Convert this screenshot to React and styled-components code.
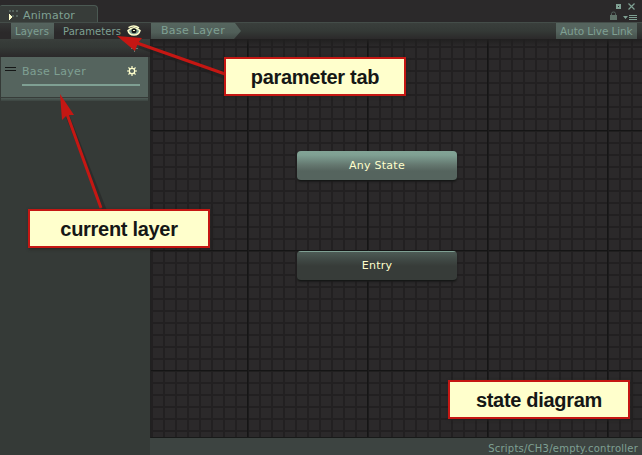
import React from "react";
import styled, { createGlobalStyle } from "styled-components";

const Global = createGlobalStyle`
  * { box-sizing: border-box; }
  body { margin: 0; background: #2b292a; overflow: hidden; }
`;

const Window = styled.div`
  position: relative;
  width: 642px;
  height: 455px;
  display: flex;
  flex-direction: column;
  background: #2b292a;
  color: #7fa093;
  font-family: "DejaVu Sans", sans-serif;
  font-size: 11px;
  overflow: hidden;
`;

const Label = styled.span`
  font-size: ${(p) => p.$size || 11}px;
  letter-spacing: ${(p) => p.$spacing || 0}px;
  line-height: 14px;
  white-space: nowrap;
`;

const TitleBar = styled.header`
  height: 22px;
  flex: none;
  display: flex;
  justify-content: space-between;
  align-items: flex-end;
`;

const WindowTab = styled.div`
  width: 98px;
  height: 17px;
  display: flex;
  align-items: flex-start;
  gap: 4px;
  padding: 3px 0 0 8px;
  border: 1px solid #4b5953;
  border-left: 0;
  border-bottom: 0;
  border-radius: 2px 4px 0 0;
  background: #373c39;
`;

const WindowControls = styled.svg`
  width: 36px;
  height: 22px;
  margin-right: 2px;
`;

const Toolbar = styled.nav`
  height: 17px;
  flex: none;
  display: flex;
  border-top: 1px solid #444d49;
  background: linear-gradient(#3a3f3c, #343936 50%, #2b292a);
`;

const ToolbarSide = styled.div`
  width: 151px;
  display: flex;
  align-items: center;
  padding-left: 11px;
  background: linear-gradient(#343635, #2b292a 60%);
`;

const ToolTab = styled.div`
  width: ${(p) => p.$width}px;
  height: 16px;
  padding: 2px 0 0 ${(p) => p.$inset}px;
  background: ${(p) => (p.$active ? "linear-gradient(#55645e, #505d58 60%, #454f4a)" : "transparent")};
`;

const Crumb = styled.div`
  width: 91px;
  height: 16px;
  padding: 1px 0 0 10px;
  background: linear-gradient(#56665f, #505e58 60%, #414946);
  clip-path: polygon(0 0, 84px 0, 90px 8px, 83px 16px, 0 16px);
`;

const LiveLink = styled.div`
  width: 81px;
  height: 16px;
  margin: 0 5px 0 auto;
  padding: 1px 0 0 4px;
  background: linear-gradient(#55645e, #55645e 50%, #45504b);
`;

const Body = styled.div`
  flex: 1;
  display: flex;
`;

const Sidebar = styled.aside`
  width: 150px;
  background: #353a37;
`;

const AddRow = styled.div`
  height: 18px;
  display: flex;
  justify-content: flex-end;
  padding-right: 11px;
  background: linear-gradient(#393e3b, #343936 45%, #2b292a);
`;

const LayerCard = styled.div`
  width: 147px;
  height: 44px;
  margin-left: 1px;
  display: grid;
  grid-template-columns: 21px 1fr 22px;
  grid-template-rows: 26px 3px 11px;
  background: linear-gradient(#55645e 0 40px, #373c39 40px 41px, #4c5954 41px 42px, #3f4844 43px);
`;

const LayerName = styled.div`
  padding-top: 8px;
`;

const Weight = styled.div`
  grid-column: 2 / 4;
  width: 118px;
  height: 2px;
  align-self: end;
  background: #7fa093;
`;

const Handle = styled.svg`
  margin: 9px 0 0 4px;
`;

const Gear = styled.svg`
  margin: 8px 0 0;
`;

const Main = styled.main`
  flex: 1;
  display: flex;
  flex-direction: column;
`;

const Canvas = styled.div`
  position: relative;
  height: 399px;
  background:
    linear-gradient(#201f1f, transparent 7px),
    repeating-linear-gradient(90deg, #151515 0 1px, #1c1b1c 1px 2px, transparent 2px 120px) 96px 0 / 120px 100%,
    repeating-linear-gradient(#151515 0 1px, #201f1f 1px 2px, transparent 2px 120px) 0 91px / 100% 120px,
    repeating-linear-gradient(90deg, #222021 0 2px, transparent 2px 12px) 0 0 / 12px 100%,
    repeating-linear-gradient(#222021 0 2px, transparent 2px 12px) 0 7px / 100% 12px,
    #2b292a;
  border-left: 1px solid #202020;
  border-bottom: 1px solid #181a19;
`;

const StateNode = styled.div`
  position: absolute;
  left: 146px;
  top: ${(p) => p.$top}px;
  width: 160px;
  height: 30px;
  padding-top: 8px;
  text-align: center;
  color: #ffffcc;
  border-radius: 4px;
  border-bottom: 1px solid #151716;
  box-shadow: 0 1px 2px #1b1b1b;
  background: ${(p) =>
    p.$entry
      ? "linear-gradient(#7fa093 0 1px, #4d5b55 1px, #414a46 8px, #373c39 15px)"
      : "linear-gradient(#82a496, #7fa093 4px, #64776f 14px, #55645e 20px)"};
`;

const Footer = styled.footer`
  flex: 1;
  padding: 4px 4px 0 0;
  text-align: right;
  background: #3d4441;
`;

const Arrows = styled.svg`
  position: absolute;
  left: 0;
  top: 0;
  pointer-events: none;
`;

const Callout = styled.div`
  position: absolute;
  left: ${(p) => p.$x}px;
  top: ${(p) => p.$y}px;
  width: 182px;
  height: 39px;
  display: flex;
  align-items: center;
  justify-content: center;
  padding-top: 2px;
  border: 2px solid #c51713;
  background: #ffffcc;
  color: #151716;
  box-shadow: 1px 1px 3px #242322;
  font: bold 20px "Liberation Sans", Arial, sans-serif;
  letter-spacing: -0.3px;
  white-space: nowrap;
`;

function AnimatorIcon() {
  return (
    <svg width="11" height="12" viewBox="0 0 11 12" shapeRendering="crispEdges">
      <path d="M1 1h2v2H1zM4 1h2v2H4zM8 1h2v2H8zM4 6h2v2H4zM8 6h2v2H8z" fill="#55645e" />
      <path d="M1 5h1v1h1v1h1v2H3v1H2v1H1z" fill="#ffffcc" />
    </svg>
  );
}

function EyeIcon() {
  return (
    <svg width="14" height="12" viewBox="0 0 14 12">
      <path d="M1.5 2.6Q7-.6 12 2.8" fill="none" stroke="#ffffcc" strokeWidth="1.4" />
      <path d="M1 5.5Q7 0 13 5.5Q12 10 7 10Q2 10 1 5.5Z" fill="#7fa093" stroke="#ffffcc" strokeWidth="1.5" />
      <circle cx="7" cy="5.8" r="2.5" fill="#151716" />
      <path d="M6 5h2v1H6z" fill="#ffffcc" />
    </svg>
  );
}

const teeth = [0, 45, 90, 135, 180, 225, 270, 315];

function AnimatorWindow() {
  return (
    <Window>
      <TitleBar>
        <WindowTab>
          <AnimatorIcon />
          <Label $spacing={0.18}>Animator</Label>
        </WindowTab>
        <WindowControls viewBox="604 0 36 22">
          <rect x="617" y="5" width="3" height="3" fill="none" stroke="#7fa093" strokeWidth="2" />
          <path d="M628.5 3.5l6 6m0-6l-6 6" stroke="#7fa093" strokeWidth="1.2" />
          <path d="M611.5 15v-1.5q0-1.5 2-1.5t2 1.5v1.5" fill="none" stroke="#55645e" />
          <path d="M610 15h7v5h-7z" fill="#607369" />
          <path d="M623 16h5l-2.5 3zM629 15h8v1h-8zm0 2h8v1h-8zm0 2h8v1h-8z" fill="#7fa093" />
        </WindowControls>
      </TitleBar>
      <Toolbar>
        <ToolbarSide>
          <ToolTab $active $width={43} $inset={4}><Label $size={10} $spacing={0.15}>Layers</Label></ToolTab>
          <ToolTab $width={73} $inset={9}><Label $size={10} $spacing={0.07}>Parameters</Label></ToolTab>
          <EyeIcon />
        </ToolbarSide>
        <Crumb><Label $spacing={0.3}>Base Layer</Label></Crumb>
        <LiveLink><Label $size={10.5} $spacing={-0.1}>Auto Live Link</Label></LiveLink>
      </Toolbar>
      <Body>
        <Sidebar>
          <AddRow>
            <svg width="10" height="14" viewBox="0 0 10 14">
              <path d="M2 9.5h7M5.5 6v7" stroke="#657a70" />
            </svg>
          </AddRow>
          <LayerCard>
            <Handle width="11" height="7" viewBox="0 0 11 7" shapeRendering="crispEdges">
              <path d="M0 1.5h11M0 4.5h11" stroke="#151716" />
            </Handle>
            <LayerName><Label $spacing={0.3}>Base Layer</Label></LayerName>
            <Gear width="12" height="12" viewBox="-6 -6 12 12">
              <circle r="2.7" fill="none" stroke="#ffffcc" strokeWidth="1.3" />
              {teeth.map((a) => (
                <path key={a} d="M0-3v-2" stroke="#ffffcc" strokeWidth="1.2" transform={`rotate(${a})`} />
              ))}
            </Gear>
            <Weight />
          </LayerCard>
        </Sidebar>
        <Main>
          <Canvas>
            <StateNode $top={112}><Label $spacing={0.25}>Any State</Label></StateNode>
            <StateNode $top={212} $entry><Label $spacing={0.2}>Entry</Label></StateNode>
          </Canvas>
          <Footer><Label $size={10} $spacing={0.23}>Scripts/CH3/empty.controller</Label></Footer>
        </Main>
      </Body>
      <Arrows width="642" height="455" viewBox="0 0 642 455">
        <path d="M139 46L225 77M68 117L105 211" stroke="#1d1c1c" strokeWidth="4" opacity=".4" />
        <path d="M137 43L225 74M67 114L101 208" stroke="#c51713" strokeWidth="3" />
        <path d="M117 36L142 38L138 43L135 51ZM60 94L74 115L67 115L62 120Z" fill="#c51713" />
      </Arrows>
      <Callout $x={224} $y={57}>parameter tab</Callout>
      <Callout $x={28} $y={209}>current layer</Callout>
      <Callout $x={448} $y={380}>state diagram</Callout>
    </Window>
  );
}

export default function App() {
  return (
    <>
      <Global />
      <AnimatorWindow />
    </>
  );
}
